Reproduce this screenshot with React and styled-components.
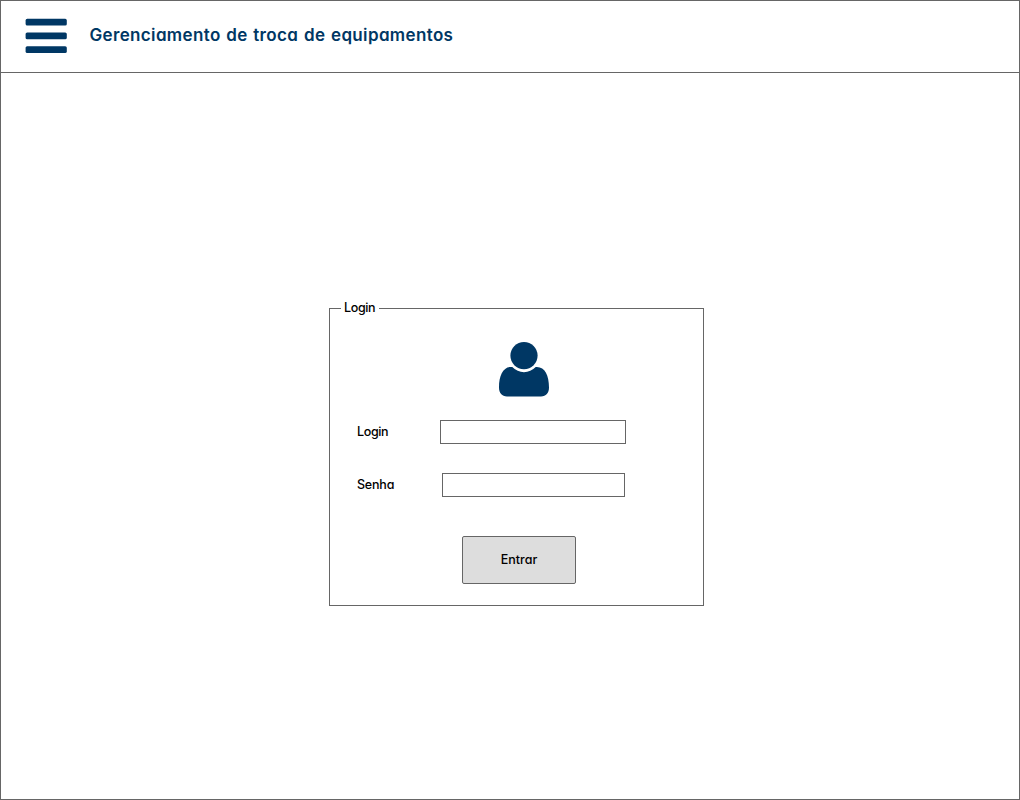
import React from "react";
import styled, { createGlobalStyle } from "styled-components";

const GlobalStyle = createGlobalStyle`
  * { box-sizing: border-box; }
  body {
    margin: 0;
    background: #fff;
    color: #000;
    font-family: Inter, "Open Sans", sans-serif;
    font-feature-settings: "cv11" 1;
  }
`;

const Page = styled.div`
  width: 1020px;
  height: 800px;
  display: flex;
  flex-direction: column;
  border: 1px solid #666;
`;

const Header = styled.header`
  height: 72px;
  flex: none;
  display: flex;
  align-items: flex-start;
  border-bottom: 1px solid #666;
  padding: 17px 24px 0;
`;

const MenuButton = styled.button`
  display: block;
  width: 43px;
  height: 36px;
  padding: 0;
  border: 0;
  background: none;
  svg { display: block; }
`;

const Title = styled.h1`
  margin: 5px 0 0 21.4px;
  font-size: 17px;
  line-height: 24px;
  font-weight: 600;
  letter-spacing: 0.36px;
  word-spacing: 1px;
  white-space: nowrap;
  color: #003764;
`;

const Main = styled.main`
  flex: 1;
  padding: 226px 0 0 328px;
`;

const LoginForm = styled.form`
  width: 375px;
  display: flex;
  flex-direction: column;
`;

const Legend = styled.div`
  height: 18px;
  display: flex;
  align-items: center;
  font-size: 12.5px;
  font-weight: 500;
  line-height: 18px;
  letter-spacing: -0.35px;
  &::before, &::after {
    content: "";
    height: 1px;
    background: #666;
  }
  &::before { width: 12px; }
  &::after { flex: 1; }
`;

const LegendText = styled.span`
  width: 38px;
  padding-left: 3px;
  height: 18px;
  white-space: nowrap;
`;

const Panel = styled.div`
  height: 297px;
  margin-top: -8px;
  border: 1px solid #666;
  border-top: 0;
  padding: 32px 0 0 27px;
`;

const Avatar = styled.svg`
  display: block;
  margin-left: 141px;
`;

const Field = styled.label`
  display: grid;
  grid-template-columns: ${(p) => p.$labelWidth}px ${(p) => p.$inputWidth}px;
  height: 24px;
  margin-top: ${(p) => p.$gap}px;
  font-size: 12.5px;
  font-weight: 500;
  line-height: 23px;
  letter-spacing: ${(p) => p.$tracking}px;
`;

const Input = styled.input`
  width: 100%;
  height: 24px;
  padding: 0 6px;
  border: 1px solid #666;
  border-radius: 0;
  background: #fff;
  font: inherit;
  outline: none;
`;

const Submit = styled.button`
  display: block;
  width: 114px;
  height: 48px;
  margin: 39px 0 0 105px;
  padding: 0 0 1px;
  border: 1px solid #666;
  border-radius: 2px;
  background: #ddd;
  color: #000;
  font: inherit;
  font-feature-settings: inherit;
  font-size: 12.5px;
  font-weight: 500;
`;

export default function App() {
  return (
    <>
      <GlobalStyle />
      <Page>
        <Header>
          <MenuButton type="button" aria-label="Menu">
            <svg width="43" height="36" fill="#003764">
              <rect x="0.6" y="0.8" width="41.2" height="6.8" rx="1.6" />
              <rect x="0.6" y="14.5" width="41.2" height="6.8" rx="1.6" />
              <rect x="0.6" y="28.2" width="41.2" height="6.8" rx="1.6" />
            </svg>
          </MenuButton>
          <Title>Gerenciamento de troca de equipamentos</Title>
        </Header>
        <Main>
          <LoginForm onSubmit={(e) => e.preventDefault()}>
            <Legend>
              <LegendText>Login</LegendText>
            </Legend>
            <Panel>
              <Avatar width="52" height="56" fill="#003764">
                <circle cx="26" cy="14.6" r="13.6" />
                <path d="M14.3 26.1Q19.3 31.2 26 31.2T37.7 26.1C46.5 25.2 51 34 51 46.5C51 52 48 55.4 43 55.4H9C4 55.4 1 52 1 46.5C1 34 5.5 25.2 14.3 26.1Z" />
              </Avatar>
              <Field $labelWidth={83} $inputWidth={186} $gap={23} $tracking={-0.35}>
                Login
                <Input type="text" />
              </Field>
              <Field $labelWidth={85} $inputWidth={183} $gap={29} $tracking={-0.2}>
                Senha
                <Input type="password" />
              </Field>
              <Submit type="submit">Entrar</Submit>
            </Panel>
          </LoginForm>
        </Main>
      </Page>
    </>
  );
}
